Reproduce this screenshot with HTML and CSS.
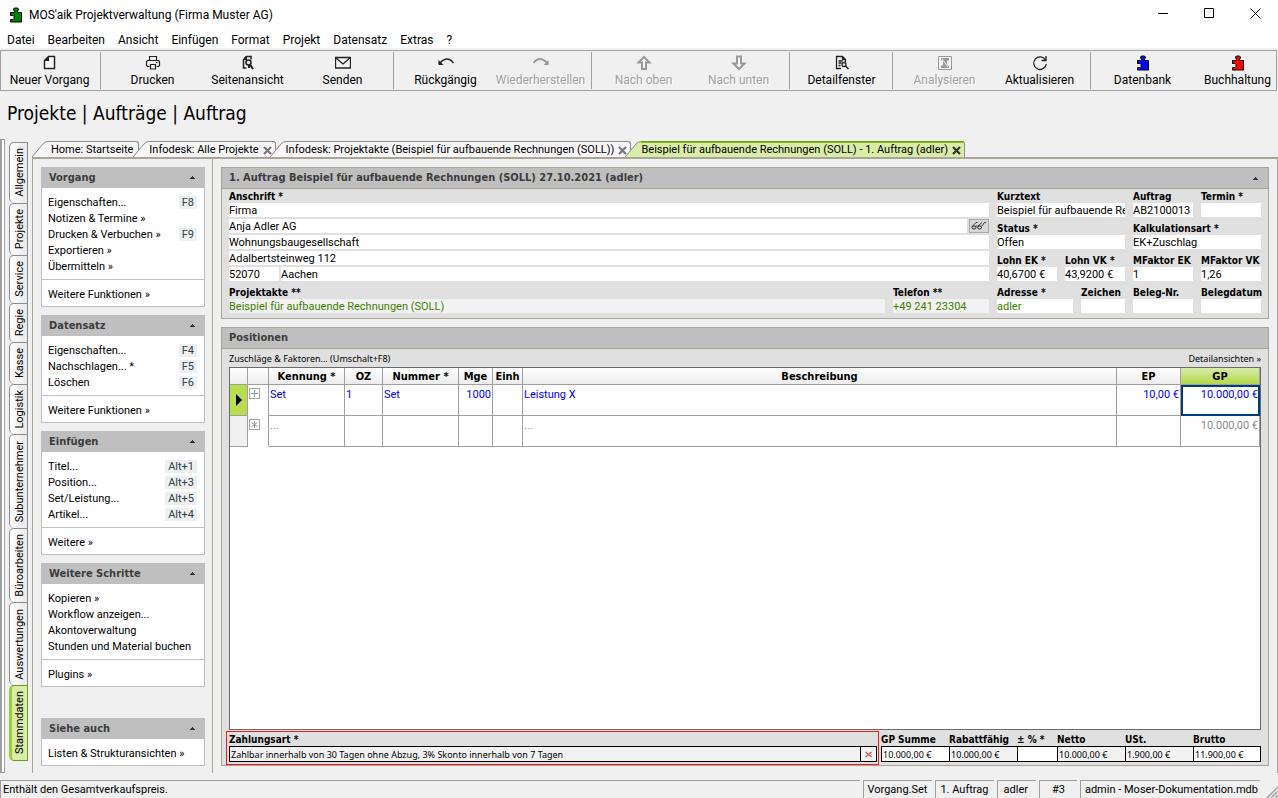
FILE: index.html
```html
<!DOCTYPE html>
<html lang="de">
<head>
    <meta charset="UTF-8">
    <meta name="viewport" content="width=device-width, initial-scale=1.0">
    <title>MOS'aik Projektverwaltung (Firma Muster AG)</title>
    <link rel="stylesheet" href="styles.css">
</head>
<body>
    <!-- Gemeinsame Symbole -->
    <svg class="symbols" width="0" height="0" aria-hidden="true">
        <symbol id="puzzle" viewBox="0 0 13 16">
            <path d="M1.500 5.500h4V4l-1-1V2l1-1h3l1 1v1l-1 1v1.500h4v9.500h-11v-2.500h2.500l1-1v-2l-1-1H1.500z" fill="currentColor" stroke="#000"/>
        </symbol>
        <symbol id="close" viewBox="0 0 9 9">
            <path d="M1 1l7 7M8 1L1 8" stroke="currentColor" stroke-width="2.2"/>
        </symbol>
        <symbol id="slope" viewBox="0 0 16 16">
            <path d="M0 16L11 3Q13 .5 16 .5V16z" fill="currentColor"/>
            <path d="M0 16L11 3Q13 .5 16 .5" fill="none" stroke="#8c8c8c"/>
        </symbol>
        <symbol id="up" viewBox="0 0 5 3">
            <path d="M2 0h1v1h1v1h1v1H0V2h1V1h1z" fill="#333"/>
        </symbol>
    </svg>

    <!-- Titelleiste -->
    <header class="titlebar">
        <svg class="app-icon" width="13" height="16"><use href="#puzzle"/></svg>
        <span class="title">MOS'aik Projektverwaltung (Firma Muster AG)</span>
        <div class="window-buttons">
            <button aria-label="Minimieren"><svg width="11" height="11"><path d="M0 5.5h10" stroke="#000"/></svg></button>
            <button aria-label="Maximieren"><svg width="11" height="11"><path d="M.5.5h9v9h-9z" fill="none" stroke="#000"/></svg></button>
            <button aria-label="Schließen"><svg width="11" height="11"><path d="M.5.5l10 10M10.500.5l-10 10" stroke="#000"/></svg></button>
        </div>
    </header>

    <!-- Menü -->
    <nav class="menu">
        <a href="#">Datei</a>
        <a href="#">Bearbeiten</a>
        <a href="#">Ansicht</a>
        <a href="#">Einfügen</a>
        <a href="#">Format</a>
        <a href="#">Projekt</a>
        <a href="#">Datensatz</a>
        <a href="#">Extras</a>
        <a href="#">?</a>
    </nav>

    <!-- Symbolleiste -->
    <div class="toolbar">
        <div class="tool-group">
            <button><svg width="16" height="16"><path d="M6.500 1.500h6v12h-10v-8z" fill="#fff" stroke="#222" stroke-width="1.500"/><path d="M2 6l5-5v5z" fill="#222"/></svg>Neuer Vorgang</button>
        </div>
        <div class="tool-group">
            <button><svg width="16" height="16"><path d="M4.500 5.500v-4h7v4M4.500 11.500h-2l-1-1v-4l1-1h11l1 1v4l-1 1h-2M5.500 9.500h5v4.500h-5zM11 7.500h1.500" fill="none" stroke="#222" stroke-width="1.200"/></svg>Drucken</button>
            <button><svg width="16" height="16"><path d="M6 1.500h5v3M3.500 4v9h3M4 4l2-2.500" fill="none" stroke="#222" stroke-width="1.500"/><path d="M3 5l4-4v4z" fill="#222"/><circle cx="8.500" cy="7.500" r="2.500" fill="none" stroke="#222" stroke-width="1.600"/><path d="M10 9.500l3 4.500M9 10v3" stroke="#222" stroke-width="2"/></svg>Seitenansicht</button>
            <button><svg width="16" height="16"><path d="M.5 2.500h15v10.500H.5zM1 3l7 6 7-6" fill="none" stroke="#222" stroke-width="1.300"/></svg>Senden</button>
        </div>
        <div class="tool-group">
            <button><svg width="16" height="16"><path d="M1 9Q9-.5 15.500 8" fill="none" stroke="#222" stroke-width="1.500"/><path d="M.5 5v5h5z" fill="#222"/></svg>Rückgängig</button>
            <button disabled><svg width="16" height="16"><path d="M15 9Q7-.5.5 8" fill="none" stroke="#999" stroke-width="1.800"/><path d="M15.500 5v5h-5z" fill="#999"/></svg>Wiederherstellen</button>
        </div>
        <div class="tool-group">
            <button disabled><svg width="16" height="16"><path d="M8 2l5.500 5.500H10V14H6V7.500H2.500z" fill="#f4f4f4" stroke="#999" stroke-width="2"/></svg>Nach oben</button>
            <button disabled><svg width="16" height="16"><path d="M8 14L2.500 8.500H6V1.500h4v7h3.500z" fill="#f4f4f4" stroke="#999" stroke-width="2"/></svg>Nach unten</button>
        </div>
        <div class="tool-group">
            <button><svg width="16" height="16"><path d="M7 13.500H2.500v-12h6l3 3V7M8.500 1.500v3h3M4.500 6h4M4.500 8h3M4.500 10.500h2" fill="none" stroke="#222" stroke-width="1.300"/><circle cx="10" cy="9.500" r="2" fill="none" stroke="#222" stroke-width="1.300"/><path d="M11.500 11l3 3" stroke="#222" stroke-width="1.500"/></svg>Detailfenster</button>
        </div>
        <div class="tool-group">
            <button disabled><svg width="16" height="16"><path d="M1.500 1.500h13v13h-13z" fill="#f4f4f4" stroke="#999"/><path d="M4 3h8v2l-2 1v4l2 1v2H4v-2l2-1V6L4 5z" fill="#999"/><path d="M5 4l6 8" stroke="#f4f4f4"/></svg>Analysieren</button>
            <button><svg width="16" height="16"><path d="M13.500 5A6.300 6.300 0 1 0 14.300 9M14 1v4.500H9.500" fill="none" stroke="#222" stroke-width="1.300"/></svg>Aktualisieren</button>
        </div>
        <div class="tool-group">
            <button class="blue"><svg width="13" height="16"><use href="#puzzle"/></svg>Datenbank</button>
            <button class="red"><svg width="13" height="16"><use href="#puzzle"/></svg>Buchhaltung</button>
        </div>
    </div>

    <h1>Projekte | Aufträge | Auftrag</h1>

    <div class="workspace">
        <div class="gutter"></div>

        <!-- Bereiche am linken Rand -->
        <nav class="side-tabs">
            <button><span>Allgemein</span></button>
            <button><span>Projekte</span></button>
            <button><span>Service</span></button>
            <button><span>Regie</span></button>
            <button><span>Kasse</span></button>
            <button><span>Logistik</span></button>
            <button><span>Subunternehmer</span></button>
            <button><span>Büroarbeiten</span></button>
            <button><span>Auswertungen</span></button>
            <button class="active"><span>Stammdaten</span></button>
        </nav>

        <div class="content">
            <!-- Registerkarten -->
            <div class="tabs">
                <div class="tab">
                    <svg width="16" height="16"><use href="#slope"/></svg>
                    <div class="tab-body"><button>Home: Startseite</button></div>
                </div>
                <div class="tab">
                    <svg width="16" height="16"><use href="#slope"/></svg>
                    <div class="tab-body"><button>Infodesk: Alle Projekte</button><button class="close" aria-label="Schließen"><svg width="9" height="9"><use href="#close"/></svg></button></div>
                </div>
                <div class="tab">
                    <svg width="16" height="16"><use href="#slope"/></svg>
                    <div class="tab-body"><button>Infodesk: Projektakte (Beispiel für aufbauende Rechnungen (SOLL))</button><button class="close" aria-label="Schließen"><svg width="9" height="9"><use href="#close"/></svg></button></div>
                </div>
                <div class="tab active">
                    <svg width="16" height="16"><use href="#slope"/></svg>
                    <div class="tab-body"><button>Beispiel für aufbauende Rechnungen (SOLL) - 1. Auftrag (adler)</button><button class="close" aria-label="Schließen"><svg width="9" height="9"><use href="#close"/></svg></button></div>
                </div>
            </div>

            <div class="columns">
                <!-- Funktionsleiste -->
                <aside class="sidebar">
                    <section class="box">
                        <h2>Vorgang <svg width="5" height="3"><use href="#up"/></svg></h2>
                        <ul>
                            <li><a href="#">Eigenschaften...</a><kbd>F8</kbd></li>
                            <li><a href="#">Notizen &amp; Termine »</a></li>
                            <li><a href="#">Drucken &amp; Verbuchen »</a><kbd>F9</kbd></li>
                            <li><a href="#">Exportieren »</a></li>
                            <li><a href="#">Übermitteln »</a></li>
                        </ul>
                        <div class="more"><a href="#">Weitere Funktionen »</a></div>
                    </section>
                    <section class="box">
                        <h2>Datensatz <svg width="5" height="3"><use href="#up"/></svg></h2>
                        <ul>
                            <li><a href="#">Eigenschaften...</a><kbd>F4</kbd></li>
                            <li><a href="#">Nachschlagen... *</a><kbd>F5</kbd></li>
                            <li><a href="#">Löschen</a><kbd>F6</kbd></li>
                        </ul>
                        <div class="more"><a href="#">Weitere Funktionen »</a></div>
                    </section>
                    <section class="box">
                        <h2>Einfügen <svg width="5" height="3"><use href="#up"/></svg></h2>
                        <ul>
                            <li><a href="#">Titel...</a><kbd>Alt+1</kbd></li>
                            <li><a href="#">Position...</a><kbd>Alt+3</kbd></li>
                            <li><a href="#">Set/Leistung...</a><kbd>Alt+5</kbd></li>
                            <li><a href="#">Artikel...</a><kbd>Alt+4</kbd></li>
                        </ul>
                        <div class="more"><a href="#">Weitere »</a></div>
                    </section>
                    <section class="box">
                        <h2>Weitere Schritte <svg width="5" height="3"><use href="#up"/></svg></h2>
                        <ul>
                            <li><a href="#">Kopieren »</a></li>
                            <li><a href="#">Workflow anzeigen...</a></li>
                            <li><a href="#">Akontoverwaltung</a></li>
                            <li><a href="#">Stunden und Material buchen</a></li>
                        </ul>
                        <div class="more"><a href="#">Plugins »</a></div>
                    </section>
                    <section class="box bottom">
                        <h2>Siehe auch <svg width="5" height="3"><use href="#up"/></svg></h2>
                        <div class="more"><a href="#">Listen &amp; Strukturansichten »</a></div>
                    </section>
                </aside>

                <main>
                    <!-- Auftragskopf -->
                    <section class="panel">
                        <h2>1. Auftrag Beispiel für aufbauende Rechnungen (SOLL) 27.10.2021 (adler) <svg width="5" height="3"><use href="#up"/></svg></h2>
                        <form class="head-form">
                            <div class="address">
                                <label for="anschrift">Anschrift *</label>
                                <div class="lines">
                                    <input id="anschrift" value="Firma">
                                    <div class="line">
                                        <input aria-label="Name" value="Anja Adler AG">
                                        <button type="button" class="glasses" aria-label="Adresse anzeigen"><svg width="16" height="10"><path d="M1 5.500l4-4h1.500M7 5l4-3.500M10.500 5.500l3-4h1.500M4.500 5h2" fill="none" stroke="#333"/><ellipse cx="3" cy="6.500" rx="2" ry="1.500" fill="none" stroke="#222"/><ellipse cx="8.500" cy="6.500" rx="2" ry="1.500" fill="none" stroke="#222"/></svg></button>
                                    </div>
                                    <input aria-label="Zusatz" value="Wohnungsbaugesellschaft">
                                    <input aria-label="Straße" value="Adalbertsteinweg 112">
                                    <div class="line">
                                        <input class="plz" aria-label="PLZ" value="52070">
                                        <input aria-label="Ort" value="Aachen">
                                    </div>
                                </div>
                                <div class="pair">
                                    <div class="field grow"><label for="akte">Projektakte **</label><input id="akte" class="link locked" value="Beispiel für aufbauende Rechnungen (SOLL)" readonly></div>
                                    <div class="field phone"><label for="telefon">Telefon **</label><input id="telefon" class="link locked" value="+49 241 23304" readonly></div>
                                </div>
                            </div>
                            <div class="details">
                                <div class="field wide"><label for="kurztext">Kurztext</label><input id="kurztext" value="Beispiel für aufbauende Rechnungen (SOLL)"></div>
                                <div class="field"><label for="auftrag">Auftrag</label><input id="auftrag" value="AB2100013"></div>
                                <div class="field"><label for="termin">Termin *</label><input id="termin"></div>
                                <div class="field wide"><label for="status">Status *</label><input id="status" value="Offen"></div>
                                <div class="field wide"><label for="kalk">Kalkulationsart *</label><input id="kalk" value="EK+Zuschlag"></div>
                                <div class="field"><label for="lohnek">Lohn EK *</label><input id="lohnek" value="40,6700 €"></div>
                                <div class="field"><label for="lohnvk">Lohn VK *</label><input id="lohnvk" value="43,9200 €"></div>
                                <div class="field"><label for="mfek">MFaktor EK</label><input id="mfek" value="1"></div>
                                <div class="field"><label for="mfvk">MFaktor VK</label><input id="mfvk" value="1,26"></div>
                                <div class="pair wide">
                                    <div class="field grow"><label for="adresse">Adresse *</label><input id="adresse" class="link" value="adler"></div>
                                    <div class="field sign"><label for="zeichen">Zeichen</label><input id="zeichen"></div>
                                </div>
                                <div class="field"><label for="belegnr">Beleg-Nr.</label><input id="belegnr"></div>
                                <div class="field"><label for="belegdatum">Belegdatum</label><input id="belegdatum"></div>
                            </div>
                        </form>
                    </section>

                    <!-- Positionen -->
                    <section class="panel positions">
                        <h2>Positionen</h2>
                        <div class="positions-body">
                            <div class="links">
                                <a href="#">Zuschläge &amp; Faktoren... (Umschalt+F8)</a>
                                <a href="#">Detailansichten »</a>
                            </div>
                            <div class="grid">
                                <table>
                                    <colgroup>
                                        <col class="c-mark"><col class="c-tree"><col class="c-long"><col class="c-oz"><col class="c-long"><col class="c-mge"><col class="c-einh"><col><col class="c-ep"><col class="c-gp">
                                    </colgroup>
                                    <thead>
                                        <tr>
                                            <th></th><th></th><th>Kennung *</th><th>OZ</th><th>Nummer *</th><th>Mge</th><th>Einh</th><th>Beschreibung</th><th>EP</th><th class="current">GP</th>
                                        </tr>
                                    </thead>
                                    <tbody>
                                        <tr>
                                            <td class="marker"><svg width="6" height="12"><path d="M0 0l6 6-6 6z"/></svg></td>
                                            <td class="tree"><button aria-label="Aufklappen"><svg width="9" height="9"><path d="M4.500 1v7M1 4.500h7" stroke="#8aa0b0"/></svg></button></td>
                                            <td>Set</td><td>1</td><td>Set</td><td class="num">1000</td><td></td><td>Leistung X</td><td class="num">10,00 €</td><td class="num selected">10.000,00 €</td>
                                        </tr>
                                        <tr class="new">
                                            <td class="empty"></td>
                                            <td class="tree"><button aria-label="Neu"><svg width="9" height="9"><path d="M4.500 1v7M1.500 2.500l6 4M7.500 2.500l-6 4" stroke="#999"/></svg></button></td>
                                            <td>...</td><td></td><td></td><td></td><td></td><td>...</td><td></td><td class="num">10.000,00 €</td>
                                        </tr>
                                    </tbody>
                                </table>
                            </div>
                            <div class="totals">
                                <div class="payment">
                                    <label for="zahlungsart">Zahlungsart *</label>
                                    <div class="payment-box">
                                        <input id="zahlungsart" value="Zahlbar innerhalb von 30 Tagen ohne Abzug, 3% Skonto innerhalb von 7 Tagen">
                                        <button aria-label="Löschen"><svg width="7" height="7"><path d="M.5 1l6 5M6.500 1l-6 5" stroke="#e05050" stroke-width="1.200"/></svg></button>
                                    </div>
                                </div>
                                <div class="sum"><label for="gpsumme">GP Summe</label><input id="gpsumme" value="10.000,00 €"></div>
                                <div class="sum locked"><label for="rabatt">Rabattfähig</label><input id="rabatt" value="10.000,00 €" readonly></div>
                                <div class="sum small"><label for="prozent">± % *</label><input id="prozent"></div>
                                <div class="sum locked"><label for="netto">Netto</label><input id="netto" value="10.000,00 €" readonly></div>
                                <div class="sum locked"><label for="ust">USt.</label><input id="ust" value="1.900,00 €" readonly></div>
                                <div class="sum last"><label for="brutto">Brutto</label><input id="brutto" value="11.900,00 €"></div>
                            </div>
                        </div>
                    </section>
                </main>
            </div>
        </div>
    </div>

    <!-- Statusleiste -->
    <footer class="statusbar">
        <span class="message">Enthält den Gesamtverkaufspreis.</span>
        <span>Vorgang.Set</span>
        <span>1. Auftrag</span>
        <span class="user">adler</span>
        <span class="count">#3</span>
        <span class="database">admin - Moser-Dokumentation.mdb</span>
        <svg class="grip" width="13" height="13"><path d="M2 13L13 2M6 13l7-7M10 13l3-3" stroke="#a0a0a0" stroke-width="1.500"/></svg>
    </footer>
</body>
</html>
```
FILE: styles.css
```css
* {
    box-sizing: border-box;
}
body {
    margin: 0;
    height: 100vh;
    display: flex;
    flex-direction: column;
    overflow: hidden;
    background-color: #f0f0f0;
    color: #000;
    font-family: Roboto, "DejaVu Sans Condensed", sans-serif;
    font-size: 11px;
    line-height: 14px;
}
a {
    color: inherit;
    text-decoration: none;
}
button, input {
    font: inherit;
    color: inherit;
    border: none;
    margin: 0;
    padding: 0;
    border-radius: 0;
    background: none;
}
h1, h2, ul {
    margin: 0;
    padding: 0;
}
.symbols {
    position: absolute;
}
.titlebar {
    display: flex;
    align-items: center;
    height: 30px;
    padding-left: 9px;
    background-color: #fff;
    font-size: 12px;
}
.app-icon {
    color: #008000;
    margin-right: 7px;
}
.title {
    flex: 1;
}
.window-buttons {
    display: flex;
}
.window-buttons button {
    width: 46px;
    height: 28px;
}
.menu {
    display: flex;
    gap: 13px;
    height: 20px;
    padding: 3px 7px 0;
    background-color: #fff;
    border-bottom: 2px solid #f0f0f0;
    font-size: 12px;
}
.toolbar {
    display: flex;
    flex: none;
    height: 41px;
    margin-right: 1px;
    padding: 1px;
    border: 1px solid #a0a0a0;
    overflow: hidden;
    font-size: 12px;
}
.tool-group {
    display: flex;
    flex: none;
}
.tool-group + .tool-group {
    margin-left: 3px;
    padding-left: 4px;
    border-left: 1px solid #a0a0a0;
}
.toolbar button {
    display: flex;
    flex-direction: column;
    align-items: center;
    width: 95px;
    padding-top: 3px;
    gap: 2px;
    white-space: nowrap;
}
.toolbar button:disabled {
    color: #a0a0a0;
    text-shadow: 1px 1px #fff;
}
.toolbar .blue svg {
    color: #00f;
}
.toolbar .red svg {
    color: #f00;
}
h1 {
    flex: none;
    padding: 10px 7px 14px;
    font: 19px/24px "DejaVu Sans Condensed", sans-serif;
}
.workspace {
    display: flex;
    flex: 1;
    min-height: 0;
}
.gutter {
    width: 5px;
    margin-right: 4px;
    border: 1px solid #a0a0a0;
    border-left-width: 2px;
    background-color: #fff;
}
.side-tabs {
    display: flex;
    flex-direction: column;
    width: 19px;
    margin: 3px 4px 12px 0;
}
.side-tabs button {
    flex: 1 1 auto;
    width: 19px;
    padding: 4px 2px;
    border: 1px solid #8c8c8c;
    border-bottom: none;
    border-radius: 5px 0 0 5px;
    background: linear-gradient(to right, #fff, #e8e8e8);
}
.side-tabs span {
    display: block;
    margin: auto;
    writing-mode: vertical-rl;
    transform: rotate(180deg);
    line-height: 15px;
}
.side-tabs .active {
    border: 1px solid #6e9c1a;
    border-left: 3px solid #9ccb3b;
    background: #d9eca8;
    padding-left: 0;
}
.content {
    display: flex;
    flex-direction: column;
    flex: 1;
    min-width: 0;
    padding-top: 2px;
}
.tabs {
    display: flex;
    height: 18px;
    border-bottom: 2px solid #a9a697;
}
.tab {
    display: flex;
    flex: none;
    margin-right: -6px;
    color: #f7f7f7;
}
.tab-body {
    display: flex;
    align-items: center;
    gap: 4px;
    padding: 1px 3px 0 0;
    border-top: 1px solid #8c8c8c;
    border-right: 1px solid #8c8c8c;
    border-top-right-radius: 3px;
    background: #f7f7f7;
    color: #000;
    white-space: nowrap;
}
.tab:first-child .tab-body {
    padding-left: 3px;
    padding-right: 5px;
}
.tab .close {
    display: flex;
    color: #777;
}
.tab.active {
    color: #d9eca8;
}
.tab.active .tab-body {
    background: linear-gradient(#8abf22 1px, #d9eca8 1px);
    border-top-color: #6e9c1a;
    color: #000;
}
.tab.active .close {
    color: #333;
}
.columns {
    display: flex;
    flex: 1;
    min-height: 0;
    border-left: 1px solid #a9a697;
    border-right: 1px solid #a9a697;
}
.sidebar {
    display: flex;
    flex-direction: column;
    gap: 8px;
    flex: none;
    width: 180px;
    padding: 8px 7px 7px 8px;
    border-right: 1px solid #a9a697;
}
h2 {
    display: flex;
    justify-content: space-between;
    align-items: center;
    height: 21px;
    padding: 0 10px 0 8px;
    background-color: #bfbfbf;
    color: #3c3c3c;
    font: bold 11px/20px "DejaVu Sans Condensed", sans-serif;
    white-space: nowrap;
}
.box h2 {
    margin: 0 -1px;
}
.box {
    border: 1px solid #bfbfbf;
    border-top: none;
    background-color: #fff;
}
.box.bottom {
    margin-top: auto;
}
.box ul {
    list-style: none;
    padding: 6px 7px 5px 6px;
    border-bottom: 1px solid #bfbfbf;
}
.box li {
    display: flex;
    justify-content: space-between;
    align-items: center;
    height: 16px;
}
.box li a {
    padding-top: 2px;
}
kbd {
    padding: 0 3px;
    background-color: #efefef;
    color: #2c4450;
    font: inherit;
    line-height: 13px;
}
.more {
    padding: 8px 6px 4px;
    line-height: 14px;
}
main {
    display: flex;
    flex-direction: column;
    gap: 8px;
    flex: 1;
    min-width: 0;
    padding: 8px;
    padding-bottom: 7px;
}
.panel {
    border: 1px solid #a9a697;
    background-color: #e0e0e0;
}
.panel h2 {
    border-bottom: 1px solid #a9a697;
    padding-left: 7px;
}
.head-form {
    display: flex;
    gap: 8px;
    padding: 0 7px 5px;
}
label {
    display: block;
    padding-top: 2px;
    font: bold 10px/12px "DejaVu Sans Condensed", sans-serif;
    white-space: nowrap;
}
.address {
    flex: 1;
    min-width: 0;
}
.head-form input {
    display: block;
    width: 100%;
    min-width: 0;
    height: 14px;
    padding: 2px 0 0;
    background-color: #fff;
}
.lines {
    display: flex;
    flex-direction: column;
    gap: 2px;
    margin-bottom: 4px;
}
.line, .pair {
    display: flex;
    gap: 2px;
}
.pair {
    gap: 8px;
}
.head-form .plz {
    width: 50px;
    flex: none;
}
.glasses {
    flex: none;
    display: flex;
    align-items: center;
    justify-content: center;
    width: 20px;
    height: 14px;
    border: 1px solid #a8a8a8;
    background-color: #d8d8d8;
}
.field {
    min-width: 0;
}
.grow {
    flex: 1;
}
.phone {
    width: 96px;
}
.sign {
    width: 44px;
}
.head-form .link {
    color: #3f7f00;
}
.head-form .locked {
    background-color: #f2f2f2;
}
.details {
    display: grid;
    grid-template-columns: repeat(4, 60px);
    gap: 4px 8px;
}
.wide {
    grid-column: span 2;
}
.positions {
    display: flex;
    flex-direction: column;
    flex: 1;
    min-height: 0;
}
.positions h2 {
    flex: none;
}
.positions-body {
    display: flex;
    flex-direction: column;
    flex: 1;
    padding: 0 7px;
}
.links {
    display: flex;
    justify-content: space-between;
    height: 18px;
    font: 9px/20px "Noto Sans", sans-serif;
}
.grid {
    flex: 1;
    border: 1px solid #6b6b6b;
    background-color: #fff;
}
table {
    width: 100%;
    table-layout: fixed;
    border-collapse: separate;
    border-spacing: 0;
}
.c-mark {
    width: 18px;
}
.c-tree {
    width: 21px;
}
.c-long {
    width: 76px;
}
.c-oz {
    width: 38px;
}
.c-mge {
    width: 34px;
}
.c-einh {
    width: 30px;
}
.c-ep {
    width: 64px;
}
.c-gp {
    width: 79px;
}
th {
    height: 17px;
    padding: 2px 0 0;
    border-right: 1px solid #a0a0a0;
    border-bottom: 1px solid #a0a0a0;
    background: linear-gradient(#fff, #ececec);
    font: bold 11px/14px "DejaVu Sans Condensed", sans-serif;
}
th.current {
    background: linear-gradient(#d9eca8, #b4d84a);
}
td {
    height: 31px;
    padding: 3px 1px 0;
    border-right: 1px solid #a0a0a0;
    border-bottom: 1px solid #a0a0a0;
    vertical-align: top;
    color: #00f;
}
td.num {
    text-align: right;
}
td.marker {
    padding: 0;
    background-color: #b8dc50;
    text-align: center;
    vertical-align: middle;
}
td.marker svg {
    display: block;
    margin: auto;
}
td.empty {
    background-color: #f0f0f0;
}
td.tree {
    border-bottom: none;
}
.new td.tree {
    border-bottom: 1px solid #fff;
}
td.tree button {
    display: flex;
    border: 1px solid #a8a8a8;
    background-color: #fff;
}
td.selected {
    padding: 1px 0 0;
    border: 2px solid #003c7c;
}
.new td {
    color: #8c8c8c;
}
.totals {
    display: flex;
    margin: 1px 0 0 -3px;
}
.totals input {
    display: block;
    width: 100%;
    height: 16px;
    padding: 0 1px;
    border: 1px solid #000;
    background-color: #fff;
    font: 9px/14px "Noto Sans", sans-serif;
}
.payment {
    flex: 1;
    margin-right: 2px;
    padding: 0 1px 2px 2px;
    border: 1px solid #ed1c24;
}
.payment-box {
    display: flex;
}
.totals .payment-box input {
    flex: 1;
    background-color: #f2f2f2;
}
.payment-box button {
    display: flex;
    align-items: center;
    justify-content: center;
    width: 16px;
    border: 1px solid #000;
    border-left: none;
    background-color: #f2f2f2;
}
.sum {
    width: 68px;
    padding-top: 1px;
}
.sum input {
    border-right: none;
}
.sum.small {
    width: 40px;
}
.sum.last input {
    border-right: 1px solid #000;
}
.sum.locked input {
    background-color: #f2f2f2;
}
.statusbar {
    display: flex;
    flex: none;
    gap: 3px;
    height: 18px;
    margin-top: 7px;
}
.statusbar span {
    padding: 2px 5px 0 4px;
    border-top: 1px solid #a0a0a0;
    border-left: 1px solid #a0a0a0;
    white-space: nowrap;
}
.statusbar .message {
    flex: 1;
    padding-left: 2px;
}
.statusbar .user {
    padding: 2px 8px 0 6px;
}
.statusbar .count {
    padding: 2px 12px 0;
}
.statusbar .database {
    padding-right: 2px;
}
.grip {
    align-self: flex-end;
    margin-left: 2px;
}
```
